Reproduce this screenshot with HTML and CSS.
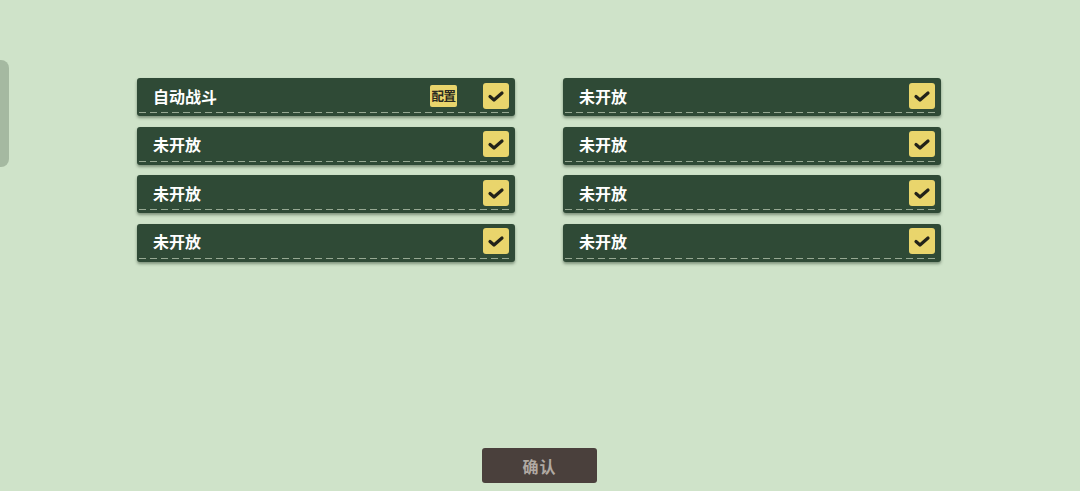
FILE: index.html
```html
<!DOCTYPE html>
<html lang="zh-CN">
<head>
    <meta charset="UTF-8">
    <meta name="viewport" content="width=device-width, initial-scale=1.0">
    <title>设置</title>
    <link rel="stylesheet" href="styles.css">
</head>
<body>
    <div class="side-tab"></div>
    <div class="page">
        <div class="options">
            <div class="option">
                <span class="label">自动战斗</span>
                <span class="config">配置</span>
                <span class="check"><svg viewBox="0 0 26 26"><path d="M7 13.5 L11 17 L19 10"/></svg></span>
            </div>
            <div class="option">
                <span class="label">未开放</span>
                <span class="check"><svg viewBox="0 0 26 26"><path d="M7 13.5 L11 17 L19 10"/></svg></span>
            </div>
            <div class="option">
                <span class="label">未开放</span>
                <span class="check"><svg viewBox="0 0 26 26"><path d="M7 13.5 L11 17 L19 10"/></svg></span>
            </div>
            <div class="option">
                <span class="label">未开放</span>
                <span class="check"><svg viewBox="0 0 26 26"><path d="M7 13.5 L11 17 L19 10"/></svg></span>
            </div>
            <div class="option">
                <span class="label">未开放</span>
                <span class="check"><svg viewBox="0 0 26 26"><path d="M7 13.5 L11 17 L19 10"/></svg></span>
            </div>
            <div class="option">
                <span class="label">未开放</span>
                <span class="check"><svg viewBox="0 0 26 26"><path d="M7 13.5 L11 17 L19 10"/></svg></span>
            </div>
            <div class="option">
                <span class="label">未开放</span>
                <span class="check"><svg viewBox="0 0 26 26"><path d="M7 13.5 L11 17 L19 10"/></svg></span>
            </div>
            <div class="option">
                <span class="label">未开放</span>
                <span class="check"><svg viewBox="0 0 26 26"><path d="M7 13.5 L11 17 L19 10"/></svg></span>
            </div>
        </div>
        <button class="confirm">确认</button>
    </div>
</body>
</html>
```

FILE: styles.css
```css
body {
    font-family: "Noto Sans CJK SC", "Noto Sans", sans-serif;
    background-color: #cfe3c9;
    margin: 0;
    padding: 0;
    overflow: hidden;
}
.side-tab {
    position: fixed;
    left: 0;
    top: 60px;
    width: 9px;
    height: 107px;
    background-color: #a5b9a1;
    border-radius: 0 8px 8px 0;
}
.page {
    height: 491px;
    box-sizing: border-box;
    padding: 78px 0 8px;
    display: flex;
    flex-direction: column;
    align-items: center;
    justify-content: space-between;
}
.options {
    display: grid;
    grid-template-columns: 378px 378px;
    grid-auto-flow: column;
    grid-template-rows: repeat(4, 38px);
    column-gap: 48px;
    row-gap: 10.5px;
    margin-left: -2px;
}
.option {
    position: relative;
    display: flex;
    align-items: center;
    padding: 0 6px 3px 16px;
    box-sizing: border-box;
    background-color: #2f4a36;
    border-radius: 3px;
    box-shadow: 0 2px 3px rgba(30, 50, 30, 0.45);
}
.option::after {
    content: "";
    position: absolute;
    left: 2px;
    right: 2px;
    bottom: 3px;
    height: 1px;
    background-image: linear-gradient(to right, #b9c9b2 0, #b9c9b2 7px, transparent 7px);
    background-size: 11px 1px;
    opacity: 0.75;
}
.label {
    flex: 1;
    color: #ffffff;
    font-size: 16px;
    font-weight: 700;
}
.config {
    background-color: #e9d56c;
    color: #2a2a20;
    font-size: 12.5px;
    font-weight: 700;
    width: 27px;
    height: 22px;
    line-height: 22px;
    text-align: center;
    border-radius: 2px;
    margin-right: 26px;
    letter-spacing: -0.5px;
    white-space: nowrap;
    overflow: hidden;
}
.check {
    width: 26px;
    height: 26px;
    background-color: #e9d56c;
    border-radius: 3px;
    display: flex;
}
.check svg {
    width: 26px;
    height: 26px;
}
.check path {
    fill: none;
    stroke: #222219;
    stroke-width: 3.2;
    stroke-linecap: round;
    stroke-linejoin: round;
}
.confirm {
    width: 115px;
    height: 35px;
    background-color: #4a403c;
    color: #b0a9a2;
    border: none;
    border-radius: 3px;
    font-family: inherit;
    font-size: 16px;
    font-weight: 700;
    letter-spacing: 1px;
    margin-left: -1px;
}
```
